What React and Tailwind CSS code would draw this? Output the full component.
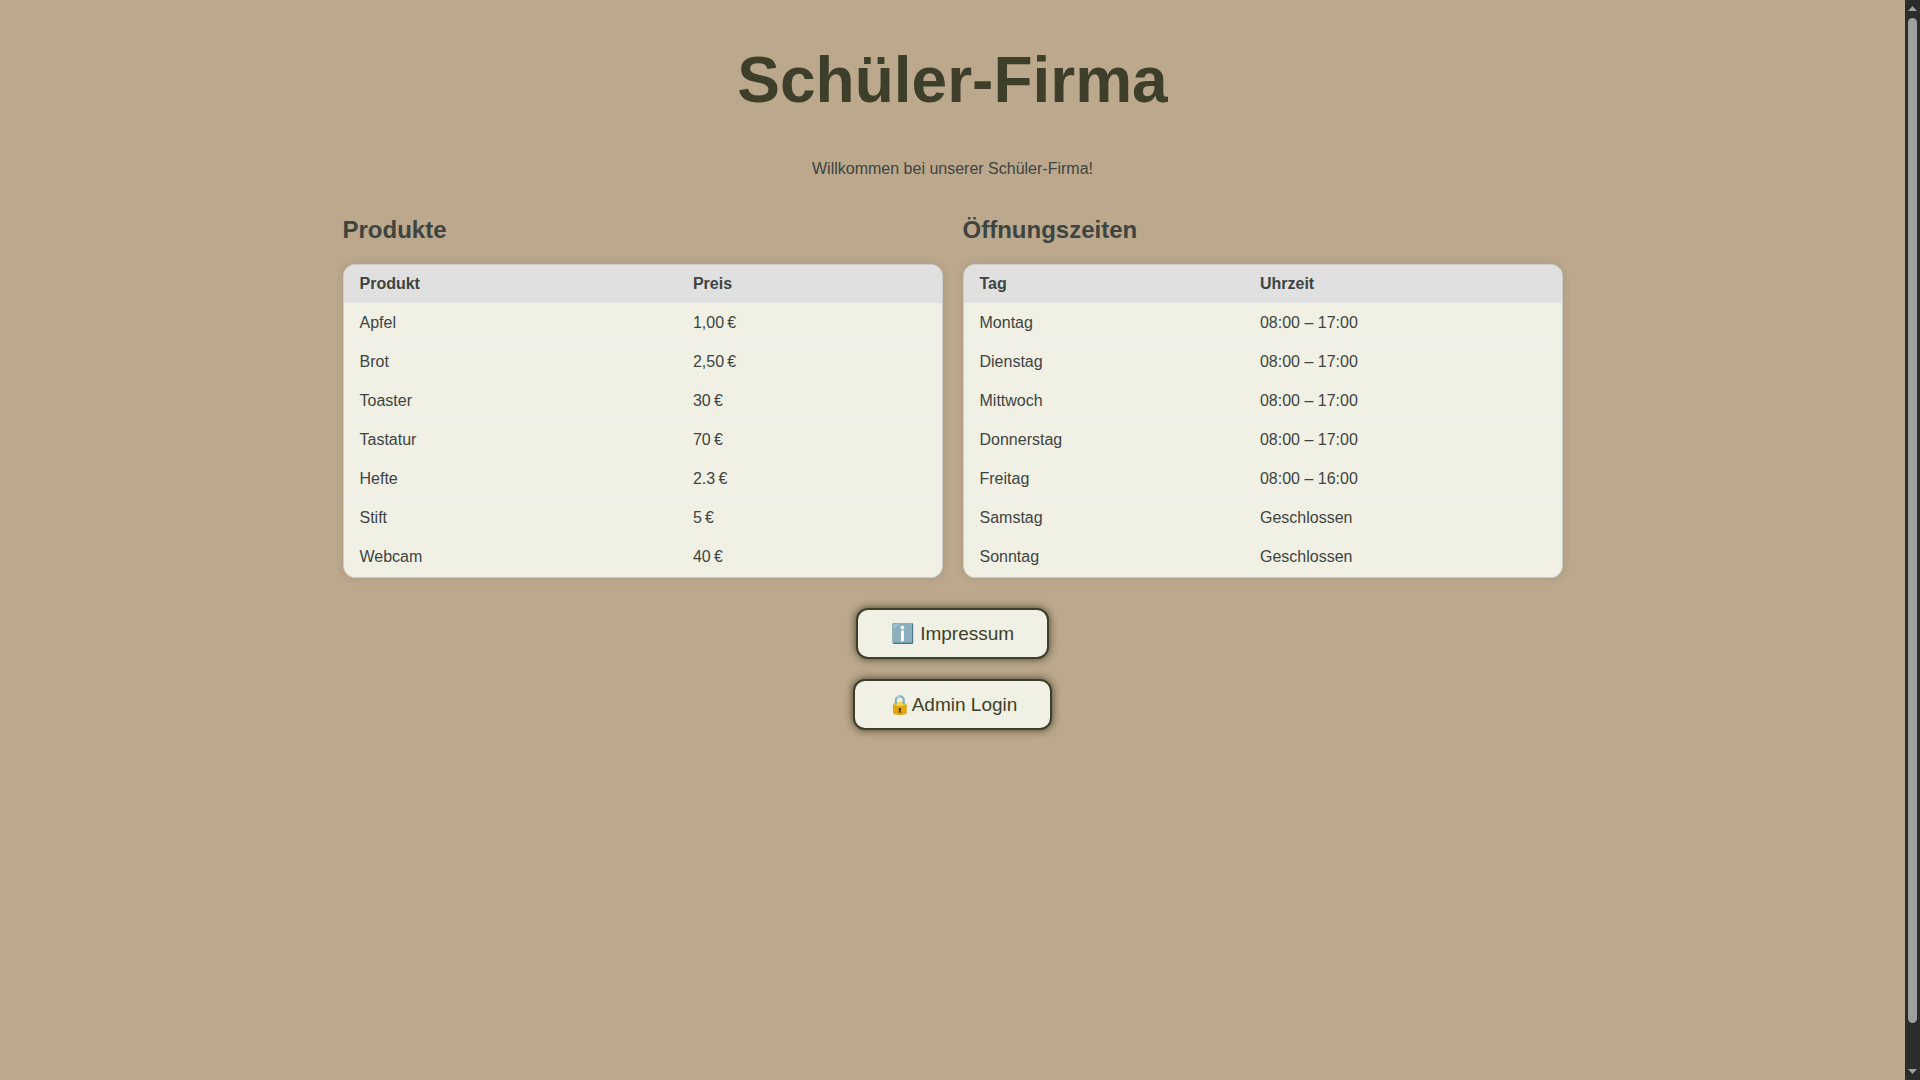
const products = [
  ["Apfel", "1,00\u202f€"],
  ["Brot", "2,50\u202f€"],
  ["Toaster", "30\u202f€"],
  ["Tastatur", "70\u202f€"],
  ["Hefte", "2.3\u202f€"],
  ["Stift", "5\u202f€"],
  ["Webcam", "40\u202f€"],
];

const hours = [
  ["Montag", "08:00 – 17:00"],
  ["Dienstag", "08:00 – 17:00"],
  ["Mittwoch", "08:00 – 17:00"],
  ["Donnerstag", "08:00 – 17:00"],
  ["Freitag", "08:00 – 16:00"],
  ["Samstag", "Geschlossen"],
  ["Sonntag", "Geschlossen"],
];

function TableSection({ id, title, columns, rows }) {
  return (
    <section className="min-w-0 flex-1">
      <h2 id={id} className="mb-5 text-2xl leading-7 font-bold">
        {title}
      </h2>
      <div className="overflow-hidden rounded-xl border border-[#cccccc] bg-[#f0f0e4] shadow-[0_0_10px_rgba(0,0,0,0.1)]">
        <table aria-labelledby={id} className="w-full border-separate border-spacing-0 text-left text-base leading-[18px]">
          <thead className="bg-[#e0e0e0]">
            <tr>
              {columns.map((name) => (
                <th key={name} scope="col" className="border-b border-[#eeeeee] px-4 py-2.5 font-bold">
                  {name}
                </th>
              ))}
            </tr>
          </thead>
          <tbody>
            {rows.map(([label, value]) => (
              <tr key={label}>
                <td className="border-b border-[#eeeeee] px-4 py-2.5">{label}</td>
                <td className="border-b border-[#eeeeee] px-4 py-2.5">{value}</td>
              </tr>
            ))}
          </tbody>
        </table>
      </div>
    </section>
  );
}

function ActionButton({ children }) {
  return (
    <button
      type="button"
      className="rounded-xl border-2 border-[#3e3f2a] bg-[#f0f0e4] px-[33px] py-3 text-[19px] leading-[23px] text-[#3e3f2a] shadow-[0_0_8px_#3e3f2a]"
    >
      {children}
    </button>
  );
}

function ScrollBar() {
  return (
    <div aria-hidden="true" className="flex w-[15px] shrink-0 flex-col items-center bg-[#2c2c2c] py-1.5">
      <svg className="h-[5px] w-[9px]" viewBox="0 0 9 5" fill="#9f9f9f">
        <path d="M0 5L4.5 0L9 5Z" />
      </svg>
      <div className="mt-[7px] mb-[46px] w-[9px] flex-1 rounded-full bg-[#9f9f9f]" />
      <svg className="h-[5px] w-[9px]" viewBox="0 0 9 5" fill="#9f9f9f">
        <path d="M0 0L4.5 5L9 0Z" />
      </svg>
    </div>
  );
}

export default function App() {
  return (
    <div className="flex min-h-screen bg-[#bca88c] font-['Liberation_Sans',Arial,sans-serif] text-[#3e4441]">
      <main className="flex min-w-0 flex-1 flex-col items-center px-5 pt-11">
        <h1 className="text-[64px] leading-[73px] font-bold text-[#3e3f2a]">Schüler-Firma</h1>
        <p className="mt-[43px] text-base leading-[18px]">Willkommen bei unserer Schüler-Firma!</p>
        <div className="mt-[38px] flex w-full max-w-[1220px] gap-5">
          <TableSection id="produkte" title="Produkte" columns={["Produkt", "Preis"]} rows={products} />
          <TableSection id="zeiten" title="Öffnungszeiten" columns={["Tag", "Uhrzeit"]} rows={hours} />
        </div>
        <div className="mt-[30px] flex flex-col items-center gap-5">
          <ActionButton>ℹ️ Impressum</ActionButton>
          <ActionButton>🔒Admin Login</ActionButton>
        </div>
      </main>
      <ScrollBar />
    </div>
  );
}
